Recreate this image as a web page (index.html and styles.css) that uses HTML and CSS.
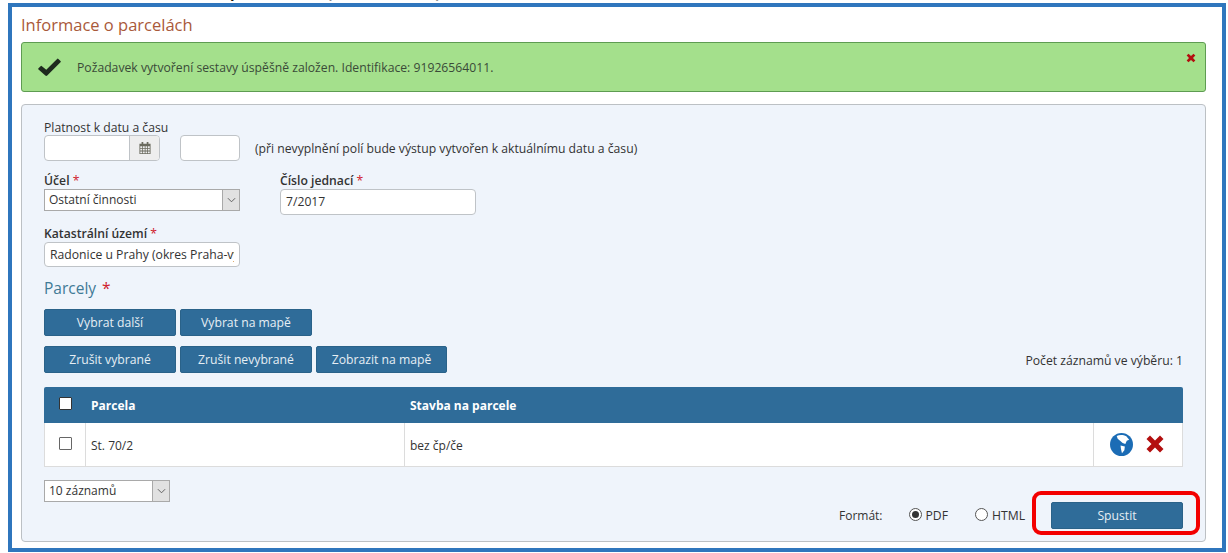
FILE: index.html
```html
<!DOCTYPE html>
<html lang="cs">
<head>
<meta charset="utf-8">
<title>Informace o parcelách</title>
<link rel="stylesheet" href="styles.css">
</head>
<body>
<div class="cutline">„Spustit“<span class="cut-note">(tlačítko dole)</span></div>
<main class="frame">
  <h1 class="title">Informace o parcelách</h1>
  <div class="alert">
    <svg class="check" viewBox="0 0 24 19"><path d="M2.600 8.600 L.4 10.800 a1 1 0 0 0 0 1.400 L7.600 18.400 a1.400 1.400 0 0 0 2 0 L23.600 4.600 a1 1 0 0 0 0-1.400 L21.400 1 a1 1 0 0 0-1.400 0 L8.600 12.400 L4 8.600 a1 1 0 0 0-1.400 0z"/></svg>
    <span class="alert-text">Požadavek vytvoření sestavy úspěšně založen. Identifikace: 91926564011.</span>
    <svg class="alert-close" viewBox="0 0 12 12"><path d="M3 .8 6 3.600 9 .8 11.200 3 8.400 6 11.200 9 9 11.200 6 8.400 3 11.200 .8 9 3.600 6 .8 3z"/></svg>
  </div>
  <section class="panel">
    <label class="lbl lbl-plain">Platnost k datu a času</label>
    <div class="row-date">
      <div class="date-group">
        <div class="date-input"></div>
        <div class="date-btn">
          <svg class="cal" viewBox="0 0 14 14"><path fill-rule="evenodd" d="M3 0h2v2h4V0h2v2h2.500v12H.5V2H3zM1.500 5v2h2.300V5zm3.200 0v2h2V5zm2.900 0v2h2V5zm2.900 0v2h2V5zM1.500 8v2h2.300V8zm3.200 0v2h2V8zm2.900 0v2h2V8zm2.900 0v2h2V8zM1.500 11v2h2.300v-2zm3.200 0v2h2v-2zm2.900 0v2h2v-2zm2.900 0v2h2v-2z"/></svg>
        </div>
      </div>
      <div class="time-input"></div>
      <span class="hint">(při nevyplnění polí bude výstup vytvořen k aktuálnímu datu a času)</span>
    </div>
    <div class="row-fields">
      <div class="field-left">
        <label class="lbl">Účel <span class="req">*</span></label>
        <div class="select select-wide"><span class="select-text">Ostatní činnosti</span><span class="select-arrow"><svg viewBox="0 0 10 6"><path d="M1 1l4 4 4-4"/></svg></span></div>
      </div>
      <div class="field-right">
        <label class="lbl">Číslo jednací <span class="req">*</span></label>
        <div class="input input-cj">7/2017</div>
      </div>
    </div>
    <div class="field-kat">
      <label class="lbl">Katastrální území <span class="req">*</span></label>
      <div class="input input-kat"><span class="clip">Radonice u Prahy (okres Praha-východ)</span></div>
    </div>
    <h2 class="section">Parcely <span class="req">*</span></h2>
    <div class="btn-row">
      <button class="btn w132">Vybrat další</button>
      <button class="btn w132">Vybrat na mapě</button>
    </div>
    <div class="btn-row btn-row2">
      <button class="btn w132">Zrušit vybrané</button>
      <button class="btn w132">Zrušit nevybrané</button>
      <button class="btn w131">Zobrazit na mapě</button>
      <span class="count">Počet záznamů ve výběru: 1</span>
    </div>
    <div class="table">
      <div class="thead">
        <div class="c-check"><span class="cb cb-head"></span></div>
        <div class="c-parcel">Parcela</div>
        <div class="c-stavba">Stavba na parcele</div>
      </div>
      <div class="tbody">
        <div class="c-check bordered"><span class="cb"></span></div>
        <div class="c-parcel bordered">St. 70/2</div>
        <div class="c-stavba bordered">bez čp/če</div>
        <div class="c-actions">
          <svg class="globe" viewBox="0 0 24 24"><circle cx="12" cy="12" r="12" fill="#1b6cb5"/><path fill="#fff" d="M7 3.200C10 1.500 14 1.800 17 3.500L20 7 17.500 8 16 11.500 13.200 10.500 10.500 8 8 6zM11 13l4.500 1-.5 4-2.500 3-1-4z"/></svg>
          <svg class="x" viewBox="0 0 20 20"><path d="M5 1.500 10 6.500 15 1.500 18.500 5 13.500 10 18.500 15 15 18.500 10 13.500 5 18.500 1.500 15 6.500 10 1.500 5z"/></svg>
        </div>
      </div>
    </div>
    <div class="bottom">
      <div class="select select-page"><span class="select-text">10 záznamů</span><span class="select-arrow"><svg viewBox="0 0 10 6"><path d="M1 1l4 4 4-4"/></svg></span></div>
      <div class="run">
        <span class="fmt">Formát:</span>
        <span class="radio radio-on"></span><span class="rlabel rlabel-pdf">PDF</span>
        <span class="radio"></span><span class="rlabel">HTML</span>
        <div class="run-btn-wrap">
          <button class="btn w132 spustit">Spustit</button>
          <span class="highlight"></span>
        </div>
      </div>
    </div>
  </section>
</main>
</body>
</html>
```
FILE: styles.css
```css
* { box-sizing: border-box; }
html, body { margin: 0; padding: 0; }
body { width: 1228px; height: 553px; overflow: hidden; background: #fff; font-family: "Open Sans", "Noto Sans", sans-serif; font-size: 12.2px; color: #333; position: relative; }
.cutline { position: absolute; left: 214px; top: -15px; font-size: 15px; font-weight: 700; color: #111; line-height: 15px; white-space: nowrap; }
.cut-note { margin-left: 46px; letter-spacing: .7px; }
.frame { margin: 3px 0 0 8px; width: 1218px; height: 549px; border: 4px solid #2f76bd; padding: 0 16px 0 9px; background: #fff; }
.title { margin: 0; height: 35px; padding-top: 6px; font-size: 16.500px; line-height: 24px; font-weight: 400; color: #a9593a; }
.alert { height: 50px; background: #a4e08c; border: 1px solid #5e9c52; border-radius: 3px; display: flex; align-items: flex-start; padding: 0 9px 0 16px; }
.check { width: 23px; height: 18px; margin-top: 15px; fill: #1e2a1e; }
.alert-text { margin: 16px 0 0 16px; line-height: 18px; flex: 1; color: #3a4a38; }
.alert-close { width: 10px; height: 10px; margin-top: 10px; fill: #b30f0f; }
.panel { margin-top: 12px; height: 438px; background: #eff4fb; border: 1px solid #bcc0c4; border-radius: 4px; padding: 14px 22px 0; }
.lbl { display: block; line-height: 17px; font-weight: 600; color: #333; }
.lbl-plain { font-weight: 400; height: 16px; line-height: 18px; }
.req { color: #d0202c; font-weight: 400; }
.row-date { display: flex; align-items: flex-start; }
.date-group { display: flex; width: 116px; height: 26px; border: 1px solid #bfc3c7; border-radius: 4px; overflow: hidden; background: #fff; }
.date-input { width: 84px; }
.date-btn { flex: 1; background: #eeeeee; border-left: 1px solid #bfc3c7; display: flex; align-items: center; justify-content: center; }
.cal { width: 12px; height: 12px; fill: #6b6b5f; }
.time-input { width: 60px; height: 26px; margin-left: 20px; border: 1px solid #bfc3c7; border-radius: 4px; background: #fff; }
.hint { margin-left: 15px; line-height: 26px; padding-top: 1px; }
.row-fields { display: flex; margin-top: 10px; }
.field-left { width: 236px; }
.field-right { width: 196px; }
.select { display: flex; height: 22px; background: #fff; border: 1px solid #a9a9a9; align-items: center; font-size: 12px; }
.select-wide { width: 196px; }
.select-page { width: 126px; }
.select-text { flex: 1; padding: 0 0 1px 4px; white-space: nowrap; }
.select-arrow { width: 17px; height: 100%; background: #e1e1e1; border-left: 1px solid #a9a9a9; display: flex; align-items: center; justify-content: center; }
.select-arrow svg { width: 9px; height: 6px; fill: none; stroke: #555; stroke-width: 1; }
.input { height: 26px; background: #fff; border: 1px solid #bfc3c7; border-radius: 4px; padding: 0 5px; line-height: 23px; white-space: nowrap; overflow: hidden; }
.input-cj { width: 196px; }
.field-kat { margin-top: 10px; }
.input-kat { width: 196px; height: 25px; }
.clip { display: block; width: 184px; overflow: hidden; }
.section { margin: 10px 0 0; height: 24px; font-size: 15.500px; line-height: 23px; font-weight: 400; color: #3f7a96; }
.section .req { margin-left: 2px; }
.btn-row { display: flex; gap: 4px; margin-top: 8px; align-items: center; }
.btn-row2 { margin-top: 10px; }
.btn { height: 27px; padding: 0; border: 1px solid #2a6289; border-radius: 2px; background: #2f6c99; color: #e6eef4; font: 400 12.200px "Open Sans", "Noto Sans", sans-serif; }
.w132 { width: 132px; }
.w131 { width: 131px; }
.count { margin-left: auto; padding-top: 2px; }
.table { margin-top: 14px; width: 1139px; font-size: 12px; }
.thead { display: flex; height: 36px; background: #2f6c99; color: #fff; font-weight: 700; align-items: center; border-radius: 2px 2px 0 0; }
.tbody { display: flex; height: 44px; background: #fff; border: 1px solid #dcdcdc; border-top: 0; }
.c-check { width: 42px; flex: none; display: flex; justify-content: center; align-items: center; }
.c-parcel { width: 319px; flex: none; padding-left: 5px; }
.c-stavba { width: 689px; flex: none; padding-left: 5px; }
.thead .c-parcel, .thead .c-stavba { padding-top: 1px; }
.tbody .c-check { width: 41px; padding-bottom: 3px; }
.tbody .c-parcel, .tbody .c-stavba { padding-top: 2px; }
.bordered { display: flex; align-items: center; border-right: 1px solid #dcdcdc; }
.c-actions { flex: 1; display: flex; align-items: center; gap: 12px; padding: 0 0 1px 16px; }
.cb { display: block; width: 13px; height: 13px; border: 1px solid #666; background: #fff; border-radius: 1px; }
.cb-head { margin-bottom: 3px; border-color: #333; }
.globe { width: 23px; height: 23px; }
.x { width: 20px; height: 20px; fill: #b30f0f; }
.bottom { display: flex; justify-content: space-between; align-items: flex-start; margin-top: 13px; }
.run { display: flex; align-items: center; margin-top: 22px; height: 27px; }
.fmt { margin-right: 26px; font-size: 12px; }
.radio { width: 13px; height: 13px; border: 1px solid #555; border-radius: 50%; background: #fff; margin-bottom: 3px; position: relative; }
.radio-on::after { content: ""; position: absolute; inset: 2px; border-radius: 50%; background: #333; }
.rlabel { margin-left: 4px; }
.rlabel-pdf { margin-right: 27px; }
.run-btn-wrap { position: relative; margin-left: 26px; }
.spustit { display: block; }
.highlight { position: absolute; left: -19px; top: -11px; width: 168px; height: 44px; border: 4px solid #f30000; border-radius: 9px; }
```
